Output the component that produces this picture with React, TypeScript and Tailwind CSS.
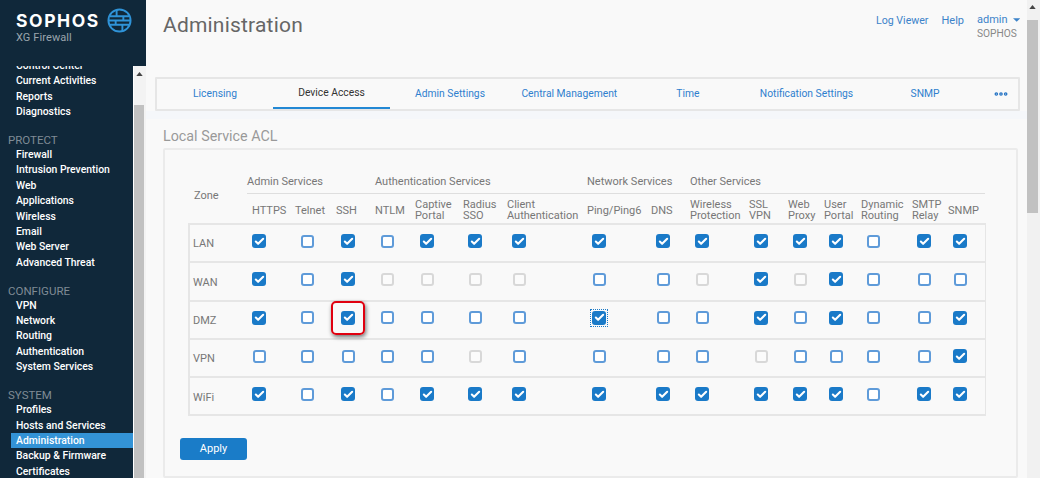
import { Check, Ellipsis } from "lucide-react";

const navGroups = [
  { title: "", items: ["Control Center", "Current Activities", "Reports", "Diagnostics"] },
  {
    title: "PROTECT",
    items: ["Firewall", "Intrusion Prevention", "Web", "Applications", "Wireless", "Email", "Web Server", "Advanced Threat"],
  },
  { title: "CONFIGURE", items: ["VPN", "Network", "Routing", "Authentication", "System Services"] },
  { title: "SYSTEM", items: ["Profiles", "Hosts and Services", "Administration", "Backup & Firmware", "Certificates"] },
];

const tabs = ["Licensing", "Device Access", "Admin Settings", "Central Management", "Time", "Notification Settings", "SNMP"];

const cols = "grid grid-cols-[48px_41px_39px_40px_48px_44px_80px_64px_39px_59px_39px_36px_37px_51px_36px_37px]";

const services = [
  ["HTTPS"],
  ["Telnet"],
  ["SSH"],
  ["NTLM"],
  ["Captive", "Portal"],
  ["Radius", "SSO"],
  ["Client", "Authentication"],
  ["Ping/Ping6"],
  ["DNS"],
  ["Wireless", "Protection"],
  ["SSL", "VPN"],
  ["Web", "Proxy"],
  ["User", "Portal"],
  ["Dynamic", "Routing"],
  ["SMTP", "Relay"],
  ["SNMP"],
];

// c = checked, u = unchecked, d = disabled
const zones = [
  { name: "LAN", row: "cucucccccccccucc" },
  { name: "WAN", row: "cucdddduudcdcuuu" },
  { name: "DMZ", row: "cucuuuucuucucuuc" },
  { name: "VPN", row: "uuuuuduuuuduuuuc" },
  { name: "WiFi", row: "cucucccccccccucc" },
];

const Box = ({ state }: { state: string }) => {
  if (state === "c")
    return (
      <span className="flex h-[14px] w-[14px] items-center justify-center rounded-[3px] bg-[#1a7ac8]">
        <Check className="h-[11px] w-[11px] text-white" strokeWidth={4.5} />
      </span>
    );
  if (state === "d")
    return <span className="ml-[0.5px] block h-[13px] w-[13px] rounded-[3px] border-2 border-[#d8d8d8] bg-[#fbfbfb]" />;
  return <span className="ml-[0.5px] block h-[13px] w-[13px] rounded-[3px] border-2 border-[#5f9bd9] bg-white" />;
};

const Logo = () => (
  <svg viewBox="0 0 26 26" className="h-[25px] w-[25px]" fill="none" stroke="#2f93d8" strokeWidth="2">
    <circle cx="13" cy="13" r="11.5" />
    <path d="M3 8.5h20M1.5 13h23M3 17.5h20M10 1.5v7M17 8.5v4.5M9 13v4.5M16 17.5v7" />
  </svg>
);

export default function App() {
  return (
    <div className="flex h-[478px] w-[1040px] overflow-hidden bg-[#f9f9f9] font-['Roboto',sans-serif] text-[11px] text-[#777]">
      <aside className="flex w-[146px] shrink-0 flex-col bg-[#10283a]">
        <div className="h-[66px] shrink-0 pl-4 pt-[8px]">
          <div className="flex items-center gap-[8px]">
            <span className="w-[83px] font-['Inter',sans-serif] text-[17.5px] font-bold leading-[25px] tracking-[1.6px] text-white">SOPHOS</span>
            <Logo />
          </div>
          <div className="mt-[-2px] text-[11px] leading-[14px] tracking-[0.1px] text-[#9aa5ad]">XG Firewall</div>
        </div>
        <div className="flex min-h-0 flex-1">
          <nav className="h-full min-w-0 flex-1 overflow-hidden">
            <div className="mt-[-8px]">
              {navGroups.map((group) => (
                <div key={group.items[0]} className="mb-[14.5px]">
                  {group.title && <div className="pl-2 text-[11.5px] leading-[13px] text-[#7f8b95]">{group.title}</div>}
                  {group.items.map((item) => (
                    <div
                      key={item}
                      className={`ml-[11px] h-[15.4px] pl-[5px] text-[10.4px] font-medium leading-[15.4px] text-white ${item === "Administration" ? "bg-[#3393d6]" : ""}`}
                    >
                      {item}
                    </div>
                  ))}
                </div>
              ))}
            </div>
          </nav>
          <div className="flex w-[13px] shrink-0 flex-col items-center border-l border-white bg-[#f3f3f3] pr-[2px]">
            <svg viewBox="0 0 8 5" className="mt-[6px] h-[4px] w-[7px]" fill="#444">
              <path d="M4 0l4 5H0z" />
            </svg>
            <div className="mt-[29px] w-full flex-1 bg-[#c1c1c1]" />
          </div>
        </div>
      </aside>

      <main className="min-w-0 flex-1">
        <header className="flex h-[77px] items-start justify-between pl-[17px] pr-[7px]">
          <h1 className="pt-[11px] text-[21px] leading-[28px] tracking-[0.2px] text-[#666]">Administration</h1>
          <div className="flex gap-[13px] pt-[13px] text-[#3c83c9]">
            <span className="text-[10.6px]">Log Viewer</span>
            <span>Help</span>
            <div className="w-[43px]">
              <div className="flex items-center gap-[5px] leading-[14px]">
                admin
                <svg viewBox="0 0 8 4" className="h-[4px] w-[8px]" fill="#3c83c9">
                  <path d="M0 0h8L4 4z" />
                </svg>
              </div>
              <div className="text-[10.2px] leading-[14px] text-[#888]">SOPHOS</div>
            </div>
          </div>
        </header>

        <div className="mx-[9px] grid h-[34px] w-[865px] grid-cols-[116px_117px_120px_repeat(4,118.6px)_1fr] rounded-[1px] border-2 border-[#e6e6e6] text-[10.3px] text-[#2f7fce]">
          {tabs.map((tab) => (
            <div
              key={tab}
              className={`flex items-center justify-center ${tab === "Device Access" ? "border-b-2 border-[#2288d4] pb-[1px] text-[#333]" : ""}`}
            >
              {tab}
            </div>
          ))}
          <div className="flex items-center justify-center">
            <Ellipsis className="h-[16px] w-[16px] text-[#2473c4]" strokeWidth={3.5} />
          </div>
        </div>
        <div className="h-2 bg-[#f5f7fa]" />

        <h2 className="ml-[17px] mt-[8px] text-[14.3px] leading-[18px] text-[#999]">Local Service ACL</h2>

        <section className="ml-[17px] mt-[3px] w-[855px] rounded-[2px] border-2 border-[#ebebeb] pb-[16px] pl-[23px] pt-[21px]">
          <div className="flex w-[797px]">
            <div className="flex w-[59px] items-center pb-[2px] pl-[6px]">Zone</div>
            <div className="flex-1">
              <div className={`${cols} h-[23px] items-center border-b border-[#dedede]`}>
                <div className="col-span-3">Admin Services</div>
                <div className="col-span-4">Authentication Services</div>
                <div className="col-span-2">Network Services</div>
                <div className="col-span-7">Other Services</div>
              </div>
              <div className={`${cols} h-[29px] items-center pt-[3px] leading-[11px]`}>
                {services.map((lines, i) => (
                  <div key={lines.join()} className={i === 0 ? "pl-[5px]" : ""}>
                    {lines.map((line) => (
                      <div key={line}>{line}</div>
                    ))}
                  </div>
                ))}
              </div>
            </div>
          </div>

          <div className="w-[798px] border-2 border-b-0 border-r-[1.5px] border-[#e6e6e6]">
            {zones.map((zone) => (
              <div key={zone.name} className="flex h-[38.3px] border-b-2 border-[#e6e6e6]">
                <div className="flex w-[56.5px] items-center pl-[3px] pt-[3px]">{zone.name}</div>
                <div className={`${cols} flex-1 items-center pb-[4px]`}>
                  {zone.row.split("").map((state, i) => (
                    <div key={i} className="relative pl-[5.5px]">
                      <Box state={state} />
                      {zone.name === "DMZ" && i === 2 && (
                        <span className="absolute left-[-5px] top-[-10px] h-[34px] w-[34px] rounded-[5px] border-[2.5px] border-[#e0000f] shadow-[1px_2px_4px_rgba(0,0,0,0.55)]" />
                      )}
                      {zone.name === "DMZ" && i === 7 && (
                        <span className="absolute left-[3px] top-[-2px] h-[18px] w-[18px] border border-dotted border-[#1a7ac8]" />
                      )}
                    </div>
                  ))}
                </div>
              </div>
            ))}
          </div>

          <button className="ml-[-8px] mt-[22px] block h-[22px] w-[67px] rounded-[3px] bg-[#1a7cc8] text-white">Apply</button>
        </section>
      </main>

      <div className="flex w-[13px] shrink-0 flex-col items-center bg-[#f1f1f1] pr-[2px]">
        <svg viewBox="0 0 8 5" className="mt-[5px] h-[4px] w-[7px]" fill="#444">
          <path d="M4 0l4 5H0z" />
        </svg>
        <div className="mt-[11px] h-[193px] w-full bg-[#c1c1c1]" />
      </div>
    </div>
  );
}
